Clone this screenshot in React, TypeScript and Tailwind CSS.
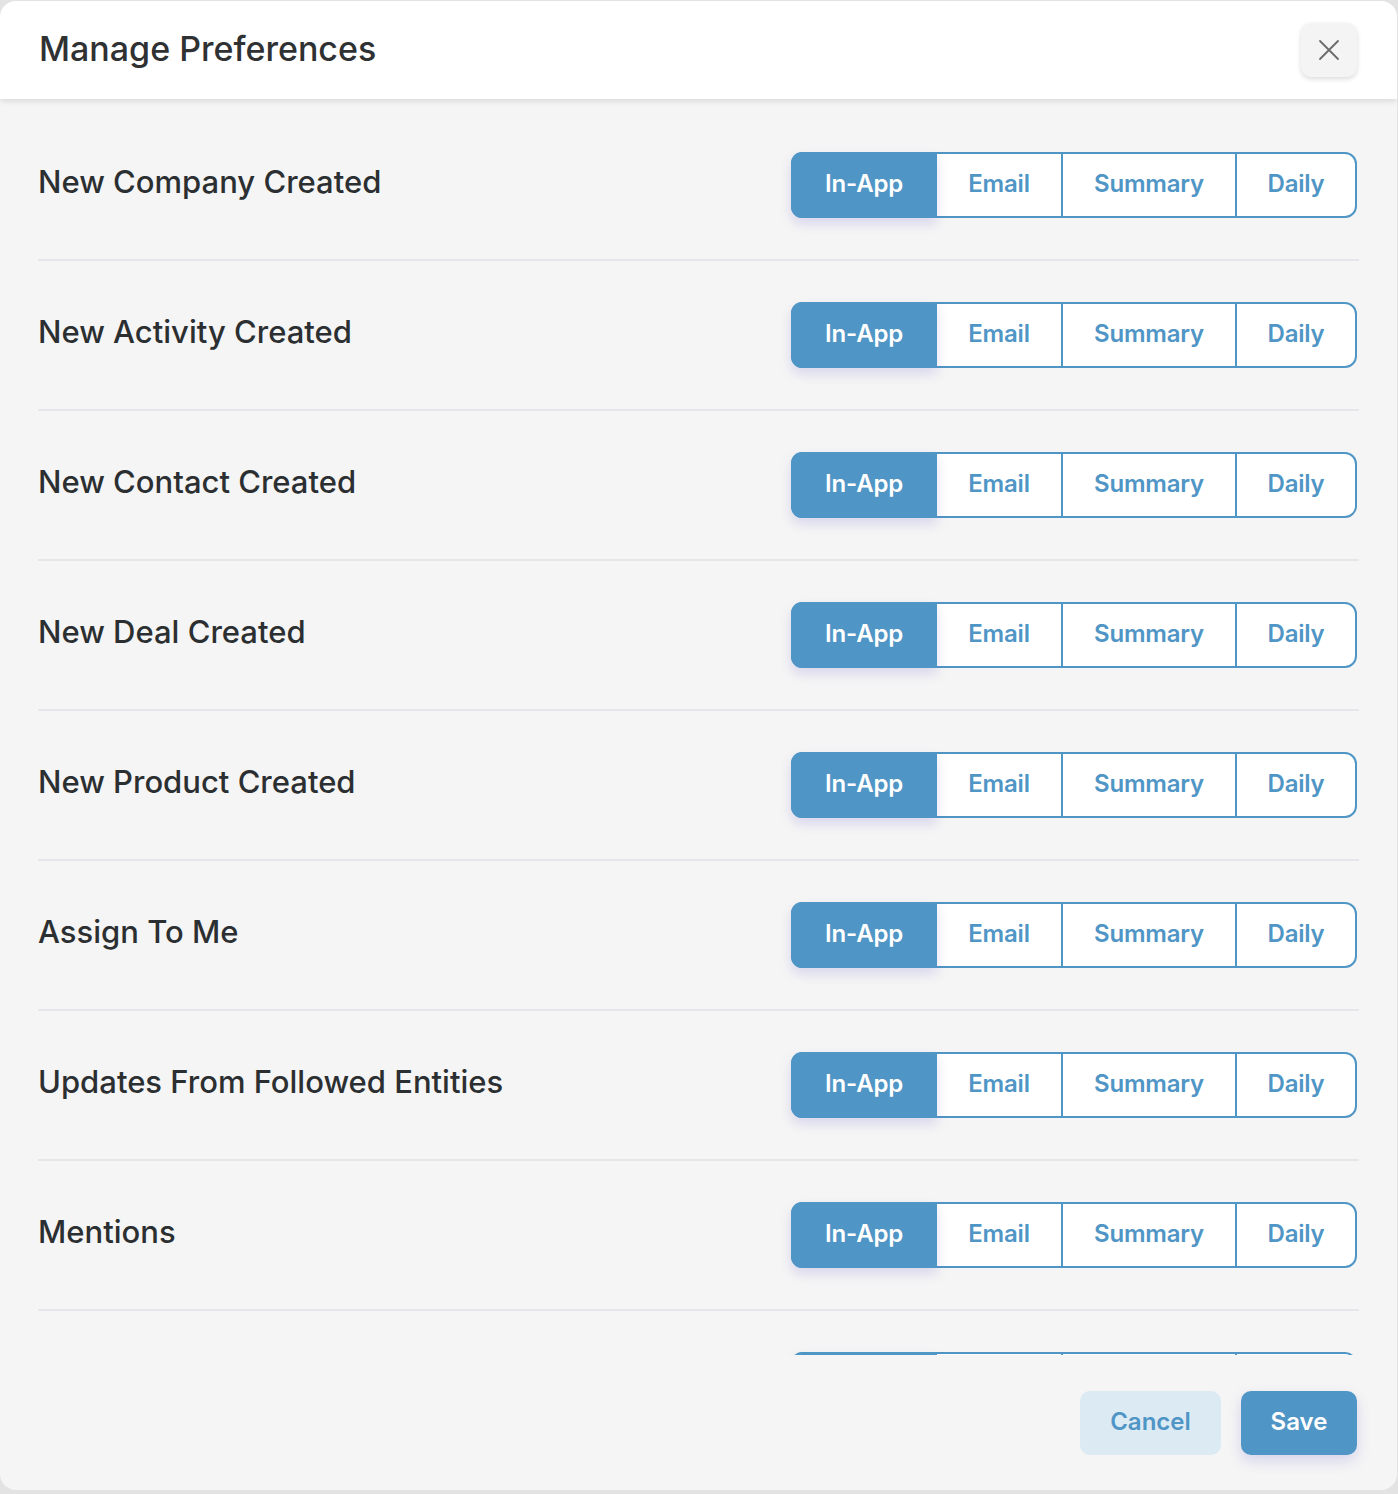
import React from "react";

const rows = [
  "New Company Created",
  "New Activity Created",
  "New Contact Created",
  "New Deal Created",
  "New Product Created",
  "Assign To Me",
  "Updates From Followed Entities",
  "Mentions",
  "Reminders",
];

function Segmented() {
  return (
    <div className="flex h-[66px] w-[566px] rounded-[12px] border-2 border-[#4f95c5] bg-white">
      <div className="-my-[2px] -ml-[2px] flex w-[146px] items-center justify-center rounded-l-[11px] bg-[#4f95c5] pb-[3px] text-white shadow-[0_6px_12px_rgba(90,80,200,0.18)]">
        In-App
      </div>
      <div className="flex w-[126px] items-center justify-center border-r-2 border-[#4f95c5] pb-[3px] text-[#4f95c5]">
        Email
      </div>
      <div className="flex w-[174px] items-center justify-center border-r-2 border-[#4f95c5] pb-[3px] text-[#4f95c5]">
        Summary
      </div>
      <div className="flex flex-1 items-center justify-center pb-[3px] text-[#4f95c5]">Daily</div>
    </div>
  );
}

export default function App() {
  return (
    <div
      className="h-[1494px] w-[1398px] bg-[#e3e3e3] pt-[1px]"
      style={{ fontFamily: "Inter, 'Noto Sans', sans-serif" }}
    >
      <div className="flex h-[1489px] w-[1397px] flex-col overflow-hidden rounded-[16px] bg-[#f5f5f5]">
        <div className="relative z-10 flex h-[98px] shrink-0 items-center justify-between bg-white pl-[39px] pr-[40px] shadow-[0_2px_6px_rgba(0,0,0,0.12)]">
          <h1 className="-mt-[3px] text-[34px] font-medium text-[#2f3133]">Manage Preferences</h1>
          <button className="flex h-[54px] w-[56px] items-center justify-center rounded-[10px] bg-[#f4f4f4] shadow-[0_2px_5px_rgba(0,0,0,0.15)]">
            <svg width="22" height="22" viewBox="0 0 22 22" fill="none" stroke="#6b6b6b" strokeWidth="1.8" strokeLinecap="round">
              <path d="M2 2L20 20M20 2L2 20" />
            </svg>
          </button>
        </div>
        <div className="h-[1256px] shrink-0 overflow-hidden px-[38px] pt-[12px]">
          {rows.map((r) => (
            <div
              key={r}
              className="flex h-[150px] items-center justify-between border-b-2 border-[#e6e6ea] pr-[2px]"
            >
              <span className="-mt-[6px] text-[31px] font-medium text-[#2c2f31]">{r}</span>
              <div className="text-[24px] font-semibold tracking-[-0.2px]">
                <Segmented />
              </div>
            </div>
          ))}
        </div>
        <div className="flex flex-1 items-start justify-end gap-[20px] px-[40px] pt-[36px]">
          <button className="h-[64px] w-[141px] rounded-[10px] bg-[#dceaf4] pb-[2px] text-[24px] font-semibold text-[#4f95c5]">
            Cancel
          </button>
          <button className="h-[64px] w-[116px] rounded-[10px] bg-[#4f95c5] pb-[2px] text-[24px] font-semibold text-white shadow-[0_6px_14px_rgba(90,80,200,0.2)]">
            Save
          </button>
        </div>
      </div>
    </div>
  );
}
